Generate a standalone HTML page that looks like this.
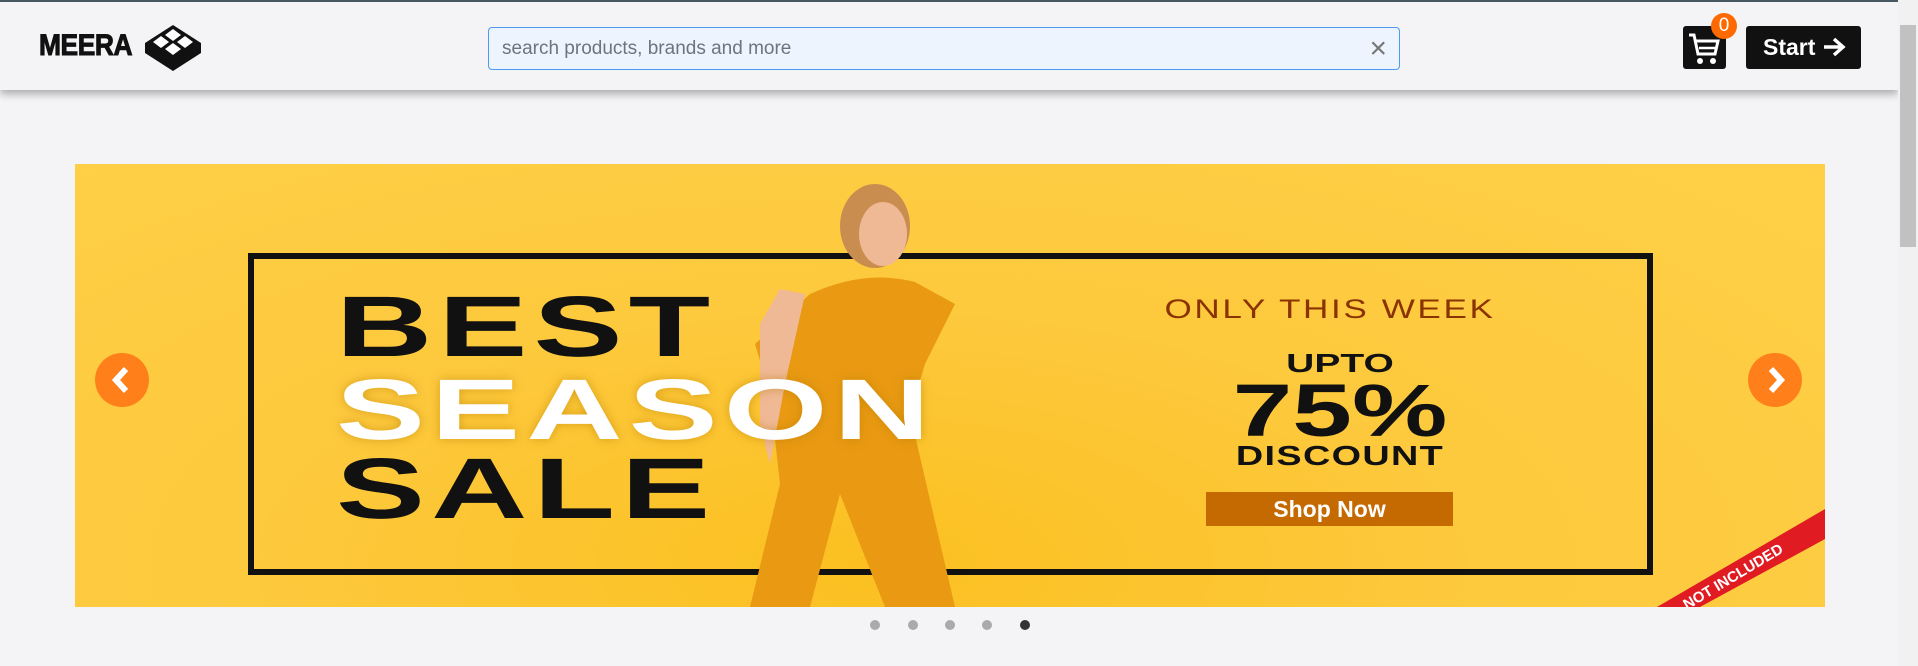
<!DOCTYPE html>
<html><head><meta charset="utf-8"><style>
*{margin:0;padding:0;box-sizing:border-box}
body{width:1918px;height:666px;overflow:hidden;background:#f4f4f6;font-family:"Liberation Sans",sans-serif;position:relative}
.top{position:absolute;left:0;top:0;width:1898px;height:2px;background:#4b5b66}
.hdr{position:absolute;left:0;top:2px;width:1898px;height:88px;background:#f4f4f6;box-shadow:0 4px 8px rgba(0,0,0,.3)}
.logo{position:absolute;left:39px;top:27px;font-weight:bold;font-size:30px;color:#111;transform:scaleX(.88);transform-origin:left;letter-spacing:-0.5px;-webkit-text-stroke:1px #111}
.search{position:absolute;left:488px;top:25px;width:912px;height:43px;background:#eef4fe;border:1px solid #4a9af0;border-radius:4px}
.search span{position:absolute;left:13px;top:10px;font-size:19px;color:#6c757d}
.search i{position:absolute;right:12px;top:4px;font-style:normal;font-size:30px;color:#777}
.cart{position:absolute;left:1683px;top:26px;width:43px;height:43px;background:#111;border-radius:3px}
.badge{position:absolute;left:1711px;top:13px;width:26px;height:26px;border-radius:50%;background:#ff6a00;color:#fff;font-size:19px;text-align:center;line-height:26px}
.start{position:absolute;left:1746px;top:26px;width:115px;height:43px;background:#111;border-radius:3px;color:#fff;font-weight:bold;font-size:23px;line-height:43px;padding-left:17px}
.sb{position:absolute;left:1898px;top:0;width:20px;height:666px;background:#f1f1f1}
.sb b{position:absolute;left:2px;top:25px;width:16px;height:222px;background:#c1c1c1}
.ban{position:absolute;left:75px;top:164px;width:1750px;height:443px;background:radial-gradient(ellipse at 45% 90%,#fbc020 0%,#fdc93d 45%,#ffd047 100%);overflow:hidden}
.frame{position:absolute;left:173px;top:89px;width:1405px;height:322px;border:6px solid #111}
.big{position:absolute;left:261px;font-weight:900;font-size:86px;letter-spacing:4px;line-height:1;transform:scaleX(1.55);transform-origin:left}
.r{position:absolute;text-align:center;font-weight:bold;color:#111}
.arrow{position:absolute;top:189px;width:54px;height:54px;border-radius:50%;background:#ff7f1a}
.dots{position:absolute;top:620px;width:10px;height:10px;border-radius:50%;background:#aaa}
</style></head><body>
<div class="top"></div>
<div class="hdr">
<div class="logo">MEERA</div>
<svg style="position:absolute;left:144px;top:22px" width="58" height="48" viewBox="0 0 58 48"><polygon points="29,1 57,19 57,29 29,47 1,29 1,19" fill="#111"/><polygon points="29,5 37,11 29,17 21,11" fill="#fff"/><polygon points="17,12 25,18 17,24 9,18" fill="#fff"/><polygon points="41,12 49,18 41,24 33,18" fill="#fff"/><polygon points="29,19 37,25 29,31 21,25" fill="#fff"/></svg>
<div class="search"><span>search products, brands and more</span><i>×</i></div>
</div>
<div class="cart"><svg width="43" height="43" viewBox="0 0 43 43"><path d="M6 9h5l4 19h17l3-13H13" fill="none" stroke="#fff" stroke-width="3"/><line x1="16" y1="22" x2="33" y2="22" stroke="#fff" stroke-width="2.5"/><circle cx="17" cy="35" r="3" fill="#fff"/><circle cx="30" cy="35" r="3" fill="#fff"/></svg></div>
<div class="badge">0</div>
<div class="start">Start <svg width="24" height="22" viewBox="0 0 24 22" style="vertical-align:-3px"><path d="M2 11h19M12 3l9 8-9 8" fill="none" stroke="#fff" stroke-width="3.5"/></svg></div>
<div class="sb"><b></b></div>
<div class="ban">
<div class="frame"></div>
<svg style="position:absolute;left:0;top:0" width="1750" height="443">
<path d="M1582 443 L1750 345 L1750 375 L1625 443Z" fill="#e11b22"/>
<text x="1612" y="446" transform="rotate(-31 1612 446)" font-family="Liberation Sans" font-weight="bold" font-size="15" fill="#fff">NOT INCLUDED</text>
<ellipse cx="800" cy="62" rx="35" ry="42" fill="#c98d4f"/>
<ellipse cx="808" cy="70" rx="24" ry="32" fill="#f0b995"/>
<path d="M735 130 Q790 105 840 118 L880 140 L850 200 L835 250 L880 443 L810 443 L765 330 L735 443 L675 443 L705 320 L695 230 L680 180 Z" fill="#e99a12"/>
<path d="M685 160 L705 125 L730 130 L710 220 L695 300 L685 260Z" fill="#f0b995"/>
</svg>
<div class="big" style="top:120px;color:#111">BEST</div>
<div class="big" style="top:203px;color:#fff;text-shadow:0 0 8px rgba(180,120,0,.5)">SEASON</div>
<div class="big" style="top:282px;color:#111">SALE</div>
<div class="r" style="left:1080px;width:350px;top:130px;font-size:27px;font-weight:normal;color:#8a3300;letter-spacing:2px;transform:scaleX(1.3)">ONLY THIS WEEK</div>
<div class="r" style="left:1140px;width:250px;top:184px;font-size:26px;transform:scaleX(1.5)">UPTO</div>
<div class="r" style="left:1120px;width:290px;top:210px;font-size:74px;line-height:1;transform:scaleX(1.45)">75%</div>
<div class="r" style="left:1120px;width:290px;top:276px;font-size:28px;letter-spacing:1px;transform:scaleX(1.35)">DISCOUNT</div>
<div class="r" style="left:1131px;width:247px;top:328px;height:34px;background:#c46a00;color:#fff;font-size:23px;line-height:34px">Shop Now</div>
<div class="arrow" style="left:20px"><svg width="54" height="54"><path d="M31 16 L21 27 L31 38" fill="none" stroke="#fff" stroke-width="6"/></svg></div>
<div class="arrow" style="left:1673px"><svg width="54" height="54"><path d="M23 16 L33 27 L23 38" fill="none" stroke="#fff" stroke-width="6"/></svg></div>
</div>
<div class="dots" style="left:870px"></div><div class="dots" style="left:908px"></div><div class="dots" style="left:945px"></div><div class="dots" style="left:982px"></div><div class="dots" style="left:1020px;background:#333"></div>
</body></html>
